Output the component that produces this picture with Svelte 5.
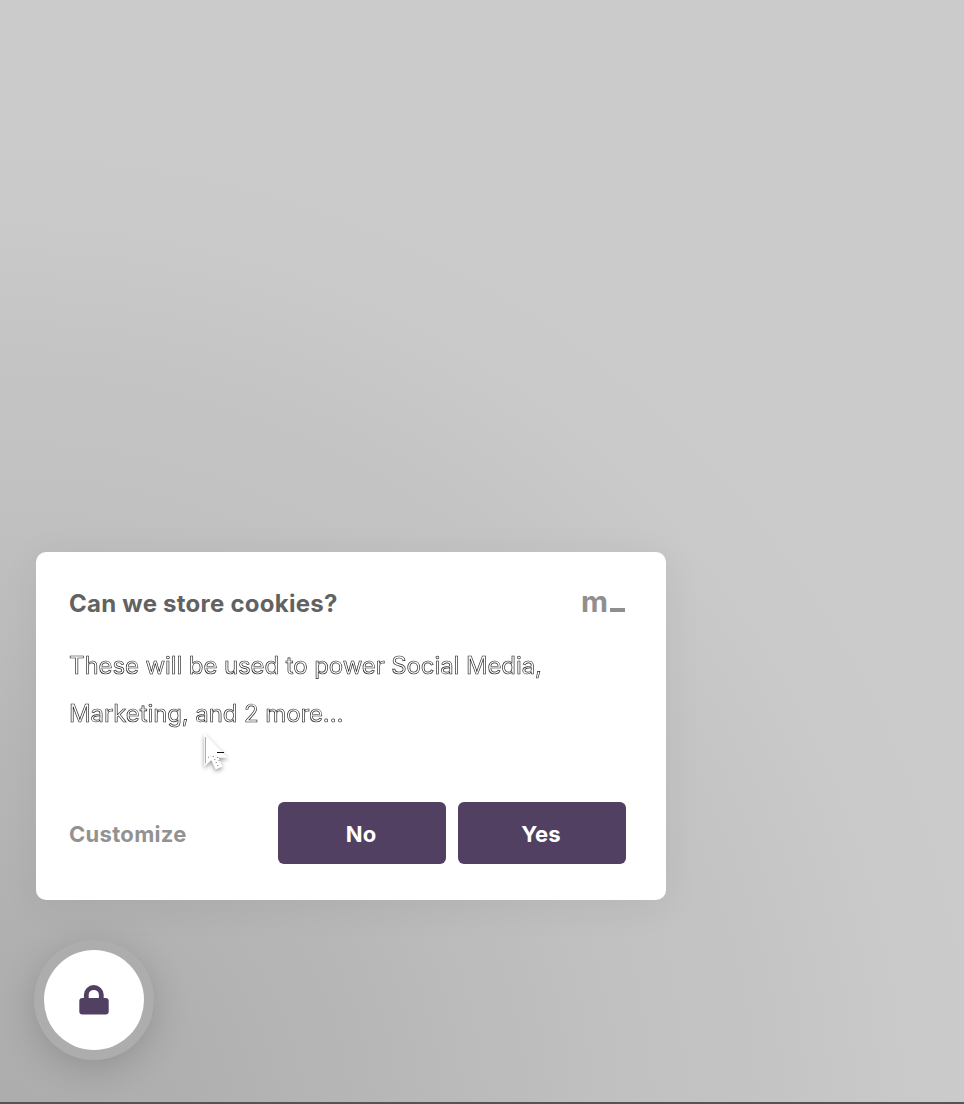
<script>
  const choices = ['No', 'Yes'];
</script>

<main class="page">
  <section class="card">
    <header class="head">
      <h1>Can we store cookies?</h1>
      <svg class="logo" width="44" height="18" viewBox="0 0 44 18" aria-hidden="true">
        <text x="-1" y="17" textLength="27" lengthAdjust="spacingAndGlyphs">m</text>
        <rect x="28" y="13" width="15" height="4" fill="#8f8f8f" />
      </svg>
    </header>
    <p class="text">These will be used to power Social Media,<br />Marketing, and 2 more...</p>
    <footer class="actions">
      <a class="customize">Customize</a>
      {#each choices as choice}
        <button>{choice}</button>
      {/each}
    </footer>
    <svg class="pointer" width="34" height="44" viewBox="0 0 34 44" aria-hidden="true">
      <path d="M5 3V33L11.5 27L16 36.5L21.5 34L17.5 25H26Z" fill="#fff" stroke="#fff" stroke-width="1.5" />
      <path d="M5.5 5V31.5" stroke="#b0b0b0" stroke-width="1" />
      <path d="M17 20.5H24" stroke="#111" stroke-width="1" />
      <path d="M8 25.5L11 23.5M13 24L18 34M17.5 25L20 31" stroke="#444" stroke-width=".8" stroke-dasharray="1 2.4" fill="none" />
    </svg>
  </section>
  <div class="lock">
    <svg width="30" height="30" viewBox="0 0 30 30" aria-hidden="true">
      <path d="M7.3 14V9.8a7.5 7.3 0 0 1 15 0V14" fill="none" stroke="#524063" stroke-width="4.8" />
      <rect x=".3" y="13" width="29.4" height="16.4" rx="3" fill="#524063" />
    </svg>
  </div>
</main>

<style>
  :global(body) { margin: 0; }
  .page {
    box-sizing: border-box;
    width: 964px;
    height: 1104px;
    padding: 552px 0 0 36px;
    overflow: hidden;
    border-bottom: 2px solid #555356;
    font-family: Inter, "Liberation Sans", sans-serif;
    background: radial-gradient(circle 980px at 0px 1130px, #acacac 0%, #b0b0b0 20%, #b8b8b8 42%, #c0c0c0 62%, #c4c4c4 78%, #c9c9c9 92%, #cbcbcb 100%);
  }
  .card {
    position: relative;
    box-sizing: border-box;
    width: 630px;
    height: 348px;
    padding: 34px 40px 36px 33px;
    display: flex;
    flex-direction: column;
    border-radius: 10px;
    background: #fff;
    box-shadow: 0 6px 40px rgba(0, 0, 0, .06);
  }
  .head { display: flex; align-items: center; justify-content: space-between; height: 36px; }
  h1 { margin: 0; font-size: 24px; font-weight: 700; line-height: 36px; letter-spacing: .25px; color: #626262; }
  .logo { display: block; overflow: visible; }
  .logo text { font-size: 29px; font-weight: 700; fill: #8f8f8f; }
  .text {
    margin: 20px 0 0;
    font-size: 24px;
    line-height: 48px;
    letter-spacing: -.1px;
    white-space: nowrap;
    color: #fff;
    -webkit-text-stroke: .65px #1c1c1c;
    will-change: transform;
  }
  .actions { display: flex; align-items: center; gap: 12px; margin-top: auto; }
  .customize { flex: 1; margin-top: 2px; font-size: 22px; font-weight: 700; letter-spacing: .3px; color: #929292; }
  button {
    width: 168px;
    height: 62px;
    padding: 2px 2px 0 0;
    border: 0;
    border-radius: 6px;
    background-color: #524063;
    color: #fff;
    font: 700 22px Inter, sans-serif;
    letter-spacing: .1px;
  }
  .pointer { position: absolute; left: 164px; top: 180px; filter: drop-shadow(0 2px 2px rgba(0, 0, 0, .4)); }
  .lock {
    display: flex;
    align-items: center;
    justify-content: center;
    width: 100px;
    height: 100px;
    margin: 50px 0 0 8px;
    border-radius: 50%;
    background: #fff;
    box-shadow: 0 0 0 10px #adadad, 0 8px 38px 8px rgba(0, 0, 0, .19);
  }
</style>
